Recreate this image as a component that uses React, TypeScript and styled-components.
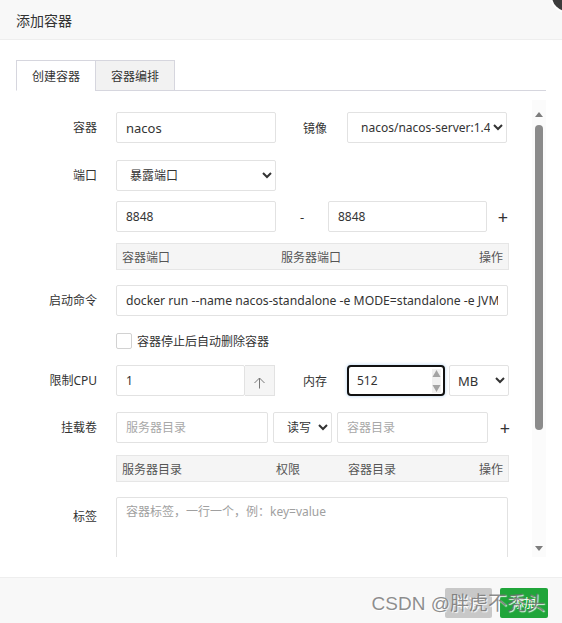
import React from "react";
import styled, { createGlobalStyle } from "styled-components";

const GlobalStyle = createGlobalStyle`
  html, body {
    margin: 0;
    padding: 0;
    background: #fff;
  }
  body {
    font-family: "Noto Sans", "Noto Sans CJK SC", sans-serif;
    color: #333;
  }
  * {
    box-sizing: border-box;
  }
`;

export default function App() {
  return (
    <>
      <GlobalStyle />
      <Layer>
        <CloseBtn />
        <Header>添加容器</Header>

        <Body>
          <TabBar>
            <Tab $active>创建容器</Tab>
            <Tab>容器编排</Tab>
          </TabBar>

          <ScrollArea>
            <Form>
              <Row $mt={12}>
                <Label>容器</Label>
                <TextInput $w={160} defaultValue="nacos" />
                <SubLabel $w={71}>镜像</SubLabel>
                <Select $w={160} defaultValue="nacos">
                  <option value="nacos">nacos/nacos-server:1.4.1</option>
                </Select>
              </Row>

              <Row $mt={17}>
                <Label>端口</Label>
                <Select $w={160} defaultValue="expose">
                  <option value="expose">暴露端口</option>
                </Select>
              </Row>

              <Row $mt={10}>
                <Label />
                <TextInput $w={160} $fs={12} defaultValue="8848" />
                <Dash>-</Dash>
                <TextInput $w={159} $fs={12} defaultValue="8848" />
                <Plus $ml={6}>+</Plus>
              </Row>

              <TableHead $mt={11} $cols="159px 1fr auto">
                <span>容器端口</span>
                <span>服务器端口</span>
                <span>操作</span>
              </TableHead>

              <Row $mt={15}>
                <Label>启动命令</Label>
                <TextInput
                  $w={392}
                  $fs={12.2}
                  defaultValue="docker run --name nacos-standalone -e MODE=standalone -e JVM_XMS=512m -e JVM_XMX=512m -p 8848:8848 -d nacos/nacos-server:1.4.1"
                />
              </Row>

              <CheckRow>
                <CheckBox />
                <CheckText>容器停止后自动删除容器</CheckText>
              </CheckRow>

              <Row $mt={16}>
                <Label>限制CPU</Label>
                <TextInput $w={129} $fs={12} defaultValue="1" />
                <UpButton>
                  <svg width="13" height="13" viewBox="0 0 13 13">
                    <path
                      d="M1.5 7 L6.5 2 L11.5 7 M6.5 2 V12.5"
                      fill="none"
                      stroke="#777"
                      strokeWidth="1"
                    />
                  </svg>
                </UpButton>
                <SubLabel $w={72}>内存</SubLabel>
                <NumberBox>
                  <NumberField defaultValue="512" />
                  <Spinner>
                    <svg width="9" height="24" viewBox="0 0 9 24">
                      <rect x="0" y="0" width="9" height="24" fill="#f0f0f0" />
                      <polygon points="0.5,8 4.5,1 8.5,8" fill="#a3a3a3" />
                      <polygon points="0.5,16 4.5,23 8.5,16" fill="#a3a3a3" />
                    </svg>
                  </Spinner>
                </NumberBox>
                <Select $w={60} $ml={4} $pl={4} $fs={13} defaultValue="MB">
                  <option value="MB">MB</option>
                </Select>
              </Row>

              <Row $mt={16}>
                <Label>挂载卷</Label>
                <TextInput $w={152} $fs={12} placeholder="服务器目录" />
                <Select $w={59} $ml={5} defaultValue="rw">
                  <option value="rw">读写</option>
                </Select>
                <TextInput $w={151} $ml={5} $fs={12} placeholder="容器目录" />
                <Plus $ml={7}>+</Plus>
              </Row>

              <TableHead $mt={12} $cols="154px 72px 1fr auto">
                <span>服务器目录</span>
                <span>权限</span>
                <span>容器目录</span>
                <span>操作</span>
              </TableHead>

              <TopRow>
                <Label $top>标签</Label>
                <TextArea placeholder="容器标签，一行一个，例：key=value" />
              </TopRow>
            </Form>

            <ScrollTrack>
              <ArrowUp />
              <Thumb />
              <TrackSpace />
              <ArrowDown />
            </ScrollTrack>
          </ScrollArea>
        </Body>

        <Footer>
          <Button $tone="grey">取消</Button>
          <Button $tone="green">添加</Button>
        </Footer>

        <Watermark>CSDN @胖虎不秃头</Watermark>
      </Layer>
    </>
  );
}

const Layer = styled.div`
  position: relative;
  width: 562px;
  height: 623px;
  display: flex;
  flex-direction: column;
  overflow: hidden;
  background: #fff;
`;

const CloseBtn = styled.div`
  position: absolute;
  top: -19px;
  right: -20px;
  width: 30px;
  height: 30px;
  border-radius: 50%;
  background: #3c3c3c;
  box-shadow: 0 0 0 2px #fff;
`;

const Header = styled.div`
  flex: none;
  height: 40px;
  padding: 0 16px;
  display: flex;
  align-items: center;
  background: #f8f8f8;
  border-bottom: 1px solid #eee;
  font-size: 14px;
  color: #333;
`;

const Body = styled.div`
  flex: none;
  height: 537px;
  padding: 20px 16px 20px 16px;
  display: flex;
  flex-direction: column;
`;

const TabBar = styled.div`
  display: flex;
  height: 31px;
  border-bottom: 1px solid #d6d6de;
`;

const Tab = styled.div<{ $active?: boolean }>`
  width: 80px;
  height: 31px;
  margin-left: ${(p) => (p.$active ? "0" : "-1px")};
  display: flex;
  align-items: center;
  justify-content: center;
  font-size: 12px;
  color: #333;
  border: 1px solid #d6d6de;
  border-bottom-color: ${(p) => (p.$active ? "#fff" : "#d6d6de")};
  background: ${(p) => (p.$active ? "#fff" : "#f2f2f2")};
`;

const ScrollArea = styled.div`
  margin-top: 9px;
  height: 457px;
  display: flex;
`;

const Form = styled.div`
  flex: 1;
  overflow: hidden;
`;

const Row = styled.div<{ $mt?: number }>`
  display: flex;
  align-items: center;
  height: 31px;
  margin-top: ${(p) => p.$mt ?? 0}px;
`;

const TopRow = styled.div`
  display: flex;
  align-items: flex-start;
  margin-top: 15px;
`;

const Label = styled.div<{ $top?: boolean }>`
  flex: none;
  width: 100px;
  padding-right: 19px;
  padding-top: ${(p) => (p.$top ? "12px" : "0")};
  text-align: right;
  font-size: 12px;
  line-height: 16px;
  color: #333;
`;

const SubLabel = styled.div<{ $w: number }>`
  flex: none;
  width: ${(p) => p.$w}px;
  padding-right: 20px;
  text-align: right;
  font-size: 12px;
  color: #333;
`;

const TextInput = styled.input<{ $w: number; $ml?: number; $fs?: number }>`
  flex: none;
  width: ${(p) => p.$w}px;
  height: 31px;
  margin-left: ${(p) => p.$ml ?? 0}px;
  padding: 0 9px;
  border: 1px solid #e2e2e2;
  border-radius: 2px;
  outline: none;
  background: #fff;
  font-family: inherit;
  font-size: ${(p) => p.$fs ?? 13}px;
  color: #333;

  &::placeholder {
    color: #a8a8a8;
  }
`;

const Select = styled.select<{ $w: number; $ml?: number; $pl?: number; $fs?: number }>`
  flex: none;
  width: ${(p) => p.$w}px;
  height: 31px;
  margin-left: ${(p) => p.$ml ?? 0}px;
  padding-left: ${(p) => p.$pl ?? 9}px;
  border: 1px solid #e2e2e2;
  border-radius: 2px;
  outline: none;
  background: #fff;
  font-family: inherit;
  font-size: ${(p) => p.$fs ?? 12}px;
  color: #333;
`;

const Dash = styled.div`
  flex: none;
  width: 52px;
  text-align: center;
  font-size: 13px;
  color: #333;
`;

const Plus = styled.div<{ $ml: number }>`
  flex: none;
  width: 20px;
  margin-left: ${(p) => p.$ml}px;
  text-align: center;
  font-size: 18px;
  line-height: 20px;
  color: #333;
`;

const TableHead = styled.div<{ $mt: number; $cols: string }>`
  display: grid;
  grid-template-columns: ${(p) => p.$cols};
  align-items: center;
  margin-top: ${(p) => p.$mt}px;
  margin-left: 100px;
  width: 393px;
  height: 27px;
  padding: 0 5px;
  background: #f5f5f5;
  border: 1px solid #e6e6e6;
  font-size: 12px;
  color: #555;
`;

const CheckRow = styled.div`
  display: flex;
  align-items: center;
  height: 16px;
  margin-top: 17px;
  margin-left: 100px;
`;

const CheckBox = styled.div`
  width: 16px;
  height: 16px;
  border: 1px solid #d2d2d2;
  border-radius: 2px;
  background: #fff;
`;

const CheckText = styled.span`
  margin-left: 5px;
  font-size: 12px;
  color: #333;
`;

const UpButton = styled.div`
  flex: none;
  width: 30px;
  height: 31px;
  display: flex;
  align-items: center;
  justify-content: center;
  padding-top: 3px;
  border: 1px solid #e2e2e2;
  border-left: none;
  background: #f5f5f5;
`;

const NumberBox = styled.div`
  flex: none;
  width: 98px;
  height: 31px;
  display: flex;
  align-items: center;
  padding-right: 2px;
  border: 2px solid #111;
  border-radius: 4px;
  background: #fff;
  box-shadow: 0 0 3px 1px rgba(170, 205, 240, 0.55);
`;

const NumberField = styled.input`
  flex: 1;
  min-width: 0;
  height: 100%;
  padding: 0 0 0 8px;
  border: none;
  outline: none;
  background: transparent;
  font-family: inherit;
  font-size: 12px;
  color: #333;
`;

const Spinner = styled.div`
  flex: none;
  display: flex;
`;

const TextArea = styled.textarea`
  flex: none;
  width: 392px;
  height: 110px;
  padding: 6px 9px;
  border: 1px solid #e2e2e2;
  border-radius: 2px;
  outline: none;
  resize: none;
  font-family: inherit;
  font-size: 12px;
  line-height: 16px;
  color: #333;

  &::placeholder {
    color: #a0a0a0;
  }
`;

const ScrollTrack = styled.div`
  flex: none;
  width: 14px;
  display: flex;
  flex-direction: column;
  align-items: center;
  background: #fbfbfb;
`;

const ArrowUp = styled.div`
  margin-top: 12px;
  width: 0;
  height: 0;
  border-left: 4px solid transparent;
  border-right: 4px solid transparent;
  border-bottom: 5px solid #7d7d7d;
`;

const Thumb = styled.div`
  margin-top: 8px;
  width: 8px;
  height: 305px;
  border-radius: 4px;
  background: #8b8b8b;
`;

const TrackSpace = styled.div`
  flex: 1;
`;

const ArrowDown = styled.div`
  margin-bottom: 6px;
  width: 0;
  height: 0;
  border-left: 4px solid transparent;
  border-right: 4px solid transparent;
  border-top: 5px solid #7d7d7d;
`;

const Footer = styled.div`
  flex: 1;
  display: flex;
  justify-content: flex-end;
  align-items: flex-start;
  gap: 8px;
  padding: 10px 14px 0 0;
  border-top: 1px solid #eee;
  background: #f8f8f8;
`;

const Button = styled.div<{ $tone: "grey" | "green" }>`
  width: ${(p) => (p.$tone === "grey" ? 47 : 48)}px;
  height: 30px;
  display: flex;
  align-items: center;
  justify-content: center;
  border-radius: 2px;
  font-size: 12px;
  color: #fff;
  background: ${(p) => (p.$tone === "grey" ? "#c8c8c8" : "#20a53a")};
`;

const Watermark = styled.div`
  position: absolute;
  right: 17px;
  bottom: 8px;
  font-family: "Liberation Sans", "Noto Sans CJK SC", sans-serif;
  font-size: 19px;
  line-height: 22px;
  color: rgba(105, 105, 105, 0.75);
  text-shadow: 1px 1px 1px rgba(255, 255, 255, 0.9);
  pointer-events: none;
  white-space: nowrap;
`;
